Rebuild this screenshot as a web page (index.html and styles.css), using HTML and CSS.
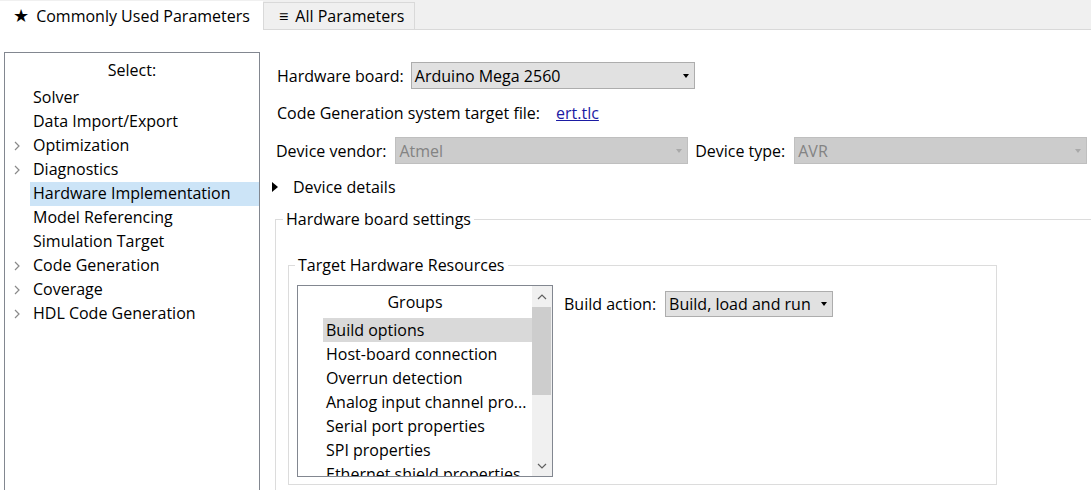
FILE: index.html
```html
<!DOCTYPE html>
<html>
<head>
<meta charset="utf-8">
<link rel="stylesheet" href="styles.css">
</head>
<body>
<div class="tabbar">
  <div class="tab tab-active"><span class="star">★</span>Commonly Used Parameters</div>
  <div class="tab tab-other"><span class="menu">≡</span>All Parameters</div>
  <div class="tab-fill"></div>
</div>
<div class="main">
  <div class="nav">
    <div class="nav-head">Select:</div>
    <div class="nav-row"><span class="chev"></span><span class="nav-label">Solver</span></div>
    <div class="nav-row"><span class="chev"></span><span class="nav-label">Data Import/Export</span></div>
    <div class="nav-row"><span class="chev"><svg width="6" height="10" viewBox="0 0 6 10"><polyline points="1,1 5,5 1,9" fill="none" stroke="#8a8a8a" stroke-width="1.2"/></svg></span><span class="nav-label">Optimization</span></div>
    <div class="nav-row"><span class="chev"><svg width="6" height="10" viewBox="0 0 6 10"><polyline points="1,1 5,5 1,9" fill="none" stroke="#8a8a8a" stroke-width="1.2"/></svg></span><span class="nav-label">Diagnostics</span></div>
    <div class="nav-row"><span class="chev"></span><span class="nav-label selected">Hardware Implementation</span></div>
    <div class="nav-row"><span class="chev"></span><span class="nav-label">Model Referencing</span></div>
    <div class="nav-row"><span class="chev"></span><span class="nav-label">Simulation Target</span></div>
    <div class="nav-row"><span class="chev"><svg width="6" height="10" viewBox="0 0 6 10"><polyline points="1,1 5,5 1,9" fill="none" stroke="#8a8a8a" stroke-width="1.2"/></svg></span><span class="nav-label">Code Generation</span></div>
    <div class="nav-row"><span class="chev"><svg width="6" height="10" viewBox="0 0 6 10"><polyline points="1,1 5,5 1,9" fill="none" stroke="#8a8a8a" stroke-width="1.2"/></svg></span><span class="nav-label">Coverage</span></div>
    <div class="nav-row"><span class="chev"><svg width="6" height="10" viewBox="0 0 6 10"><polyline points="1,1 5,5 1,9" fill="none" stroke="#8a8a8a" stroke-width="1.2"/></svg></span><span class="nav-label">HDL Code Generation</span></div>
  </div>
  <div class="content">
    <div class="row-board">
      <span class="lbl">Hardware board:</span>
      <div class="combo combo-board"><span>Arduino Mega 2560</span><span class="caret"></span></div>
    </div>
    <div class="row-target">
      <span class="lbl">Code Generation system target file:</span>
      <a class="link" href="#">ert.tlc</a>
    </div>
    <div class="row-device">
      <span class="lbl">Device vendor:</span>
      <div class="combo combo-dis combo-vendor"><span>Atmel</span><span class="caret caret-dis"></span></div>
      <span class="lbl lbl-type">Device type:</span>
      <div class="combo combo-dis combo-type"><span>AVR</span><span class="caret caret-dis"></span></div>
    </div>
    <div class="row-details">
      <span class="tri"></span>
      <span class="details-text">Device details</span>
    </div>
    <fieldset class="grp-outer">
      <legend class="legend-outer">Hardware board settings</legend>
      <fieldset class="grp-inner">
        <legend class="legend-inner">Target Hardware Resources</legend>
        <div class="trh">
          <div class="listbox">
            <div class="list-main">
              <div class="list-head">Groups</div>
              <div class="list-item selected-gray">Build options</div>
              <div class="list-item">Host-board connection</div>
              <div class="list-item">Overrun detection</div>
              <div class="list-item">Analog input channel pro...</div>
              <div class="list-item">Serial port properties</div>
              <div class="list-item">SPI properties</div>
              <div class="list-item">Ethernet shield properties</div>
            </div>
            <div class="vscroll">
              <div class="sb-btn"><svg width="10" height="6" viewBox="0 0 10 6"><polyline points="1,5 5,1 9,5" fill="none" stroke="#606060" stroke-width="1.2"/></svg></div>
              <div class="sb-thumb"></div>
              <div class="sb-track"></div>
              <div class="sb-btn"><svg width="10" height="6" viewBox="0 0 10 6"><polyline points="1,1 5,5 9,1" fill="none" stroke="#606060" stroke-width="1.2"/></svg></div>
            </div>
          </div>
          <div class="build-row">
            <span class="lbl">Build action:</span>
            <div class="combo combo-build"><span>Build, load and run</span><span class="caret"></span></div>
          </div>
        </div>
      </fieldset>
    </fieldset>
  </div>
</div>
</body>
</html>
```
FILE: styles.css
```css
* { box-sizing: border-box; }
html, body { margin: 0; padding: 0; }
body {
  width: 1091px;
  height: 490px;
  overflow: hidden;
  background: #ffffff;
  font-family: "Open Sans", "Noto Sans", sans-serif;
  font-size: 16px;
  color: #000000;
}

/* tabs */
.tabbar {
  display: flex;
  height: 30px;
  padding-top: 1px;
  background: #f0f0f0;
}
.tab { display: flex; align-items: center; white-space: nowrap; }
.tab-active {
  width: 263px;
  height: 29px;
  padding-left: 13px;
  background: #ffffff;
}
.star { font-family: "DejaVu Sans", sans-serif; font-size: 18px; line-height: 1; margin-right: 7px; }
.tab-other {
  width: 152px;
  height: 28px;
  margin-top: 1px;
  padding-left: 15px;
  border: 1px solid #d9d9d9;
  background: #f0f0f0;
}
.menu { margin-right: 7px; }
.tab-fill { flex: 1; height: 29px; border-bottom: 1px solid #d9d9d9; }

/* main layout */
.main { display: flex; padding-top: 22px; }

.nav {
  margin-left: 4px;
  width: 256px;
  height: 450px;
  flex: none;
  border: 1px solid #828790;
  padding-top: 5px;
}
.nav-head { height: 24px; line-height: 24px; text-align: center; margin-bottom: 4px; }
.nav-row { display: flex; height: 24px; line-height: 23px; }
.chev { width: 25px; flex: none; display: flex; align-items: center; padding-left: 9px; }
.nav-label { flex: 1; padding-left: 3px; white-space: nowrap; }
.selected { background: #cce4f7; }

.content { flex: 1; min-width: 0; padding: 10px 4px 0 12px; }
.lbl { white-space: nowrap; }

.row-board { display: flex; align-items: center; height: 27px; margin-left: 5px; }
.combo {
  display: flex;
  align-items: center;
  justify-content: space-between;
  height: 27px;
  padding: 0 5px 0 3px;
  border: 1px solid #adadad;
  background: #e1e1e1;
  white-space: nowrap;
}
.combo-board { width: 284px; margin-left: 7px; }
.caret {
  width: 0; height: 0;
  border-left: 3.5px solid transparent;
  border-right: 3.5px solid transparent;
  border-top: 4px solid #000000;
}
.caret-dis { border-top-color: #a9a9a9; }

.row-target { display: flex; align-items: center; height: 24px; margin-top: 12px; margin-left: 5px; }
.link { margin-left: 16px; color: #1b1ba3; text-decoration: underline; }

.row-device { display: flex; align-items: center; height: 27px; margin-top: 12px; margin-left: 4px; }
.combo-dis { flex: 1; background: #cccccc; border-color: #bfbfbf; color: #838383; }
.combo-vendor { margin-left: 9px; }
.lbl-type { margin-left: 7px; }
.combo-type { margin-left: 9px; }

.row-details { display: flex; align-items: center; height: 24px; margin-top: 11px; }
.tri {
  width: 0; height: 0;
  border-top: 5px solid transparent;
  border-bottom: 5px solid transparent;
  border-left: 6px solid #000000;
}
.details-text { margin-left: 15px; }

/* group boxes */
fieldset { margin: 0; padding: 0; min-width: 0; }
legend { line-height: 20px; height: 20px; white-space: nowrap; }
.grp-outer {
  margin: 10px -10px 0 3px;
  border: 1px solid #dcdcdc;
  border-right: none;
  padding-bottom: 20px;
}
.legend-outer { margin-left: 7px; padding: 0 3px; }
.grp-inner {
  margin: 26px 0 0 12px;
  width: 709px;
  border: 1px solid #dcdcdc;
}
.legend-inner { margin-left: 6px; padding: 0 3px; }

.trh { display: flex; align-items: flex-start; padding: 10px 0 7px 8px; }
.listbox {
  display: flex;
  width: 256px;
  height: 192px;
  flex: none;
  border: 1px solid #828790;
}
.list-main { flex: 1; min-width: 0; padding-top: 3px; overflow: hidden; }
.list-head { height: 26px; line-height: 26px; text-align: center; margin-bottom: 3px; }
.list-item { height: 24px; line-height: 24px; margin-left: 25px; padding-left: 3px; white-space: nowrap; }
.selected-gray { background: #d9d9d9; }

.vscroll { width: 20px; flex: none; display: flex; flex-direction: column; background: #f0f0f0; }
.sb-btn { height: 21px; display: flex; align-items: center; justify-content: center; }
.sb-thumb { height: 88px; margin-right: 1px; background: #cdcdcd; }
.sb-track { flex: 1; }

.build-row { display: flex; align-items: center; margin: 6px 0 0 11px; }
.combo-build { width: 168px; height: 26px; margin-left: 9px; }
```
